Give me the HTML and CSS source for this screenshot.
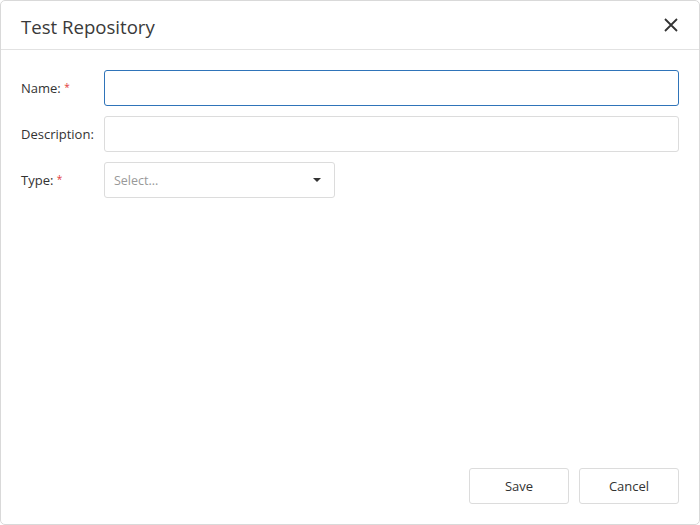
FILE: index.html
```html
<!DOCTYPE html>
<html>
<head>
<meta charset="utf-8">
<link rel="stylesheet" href="styles.css">
</head>
<body>
<div class="dialog">
  <div class="header">
    <div class="title">Test Repository</div>
    <button class="close" aria-label="Close">
      <svg width="14" height="14" viewBox="0 0 14 14"><path d="M1 1L13 13M13 1L1 13" stroke="#333" stroke-width="1.8" fill="none"/></svg>
    </button>
  </div>
  <div class="body">
    <div class="row">
      <label class="label">Name: <span class="req">*</span></label>
      <div class="input focused"></div>
    </div>
    <div class="row">
      <label class="label">Description:</label>
      <div class="input"></div>
    </div>
    <div class="row">
      <label class="label">Type: <span class="req">*</span></label>
      <div class="input select"><span class="placeholder">Select...</span><span class="caret"></span></div>
    </div>
  </div>
  <div class="footer">
    <button class="btn">Save</button>
    <button class="btn">Cancel</button>
  </div>
</div>
</body>
</html>
```
FILE: styles.css
```css
html, body { margin: 0; padding: 0; background: #fff; }
body { font-family: "Open Sans", "Noto Sans", sans-serif; color: #333; width: 700px; height: 525px; }
.dialog {
  box-sizing: border-box;
  width: 700px; height: 525px;
  border: 1px solid #d9d9d9;
  border-radius: 5px;
  display: flex; flex-direction: column;
}
.header {
  height: 48px;
  border-bottom: 1px solid #e2e2e2;
  display: flex; align-items: center; justify-content: space-between;
  padding: 0 20px 0 20px;
}
.title { font-size: 18.6px; color: #3a3a3a; padding-top: 2px; }
.close { border: 0; background: none; padding: 0; width: 14px; height: 14px; display: flex; margin-right: 1px; }
.body { flex: 1; padding: 20px 20px 0 20px; display: flex; flex-direction: column; gap: 10px; }
.row { display: flex; align-items: center; height: 36px; }
.label { width: 83px; font-size: 13px; color: #333; }
.req { color: #e23a3a; font-size: 10px; vertical-align: 2px; }
.input {
  box-sizing: border-box; flex: 1; height: 36px;
  border: 1px solid #dcdcdc; border-radius: 3px;
}
.input.focused { border-color: #2f74b9; }
.input.select {
  flex: none; width: 231px;
  display: flex; align-items: center; justify-content: space-between;
  padding: 0 13px 0 9px;
}
.placeholder { color: #999; font-size: 12.5px; }
.caret { width: 0; height: 0; border-left: 4px solid transparent; border-right: 4px solid transparent; border-top: 4px solid #333; }
.footer { display: flex; justify-content: flex-end; gap: 10px; padding: 0 20px 20px 0; }
.btn {
  box-sizing: border-box; width: 100px; height: 36px;
  border: 1px solid #dcdcdc; border-radius: 3px; background: #fff;
  font-family: "Open Sans", "Noto Sans", sans-serif; font-size: 13px; color: #333;
}
```
